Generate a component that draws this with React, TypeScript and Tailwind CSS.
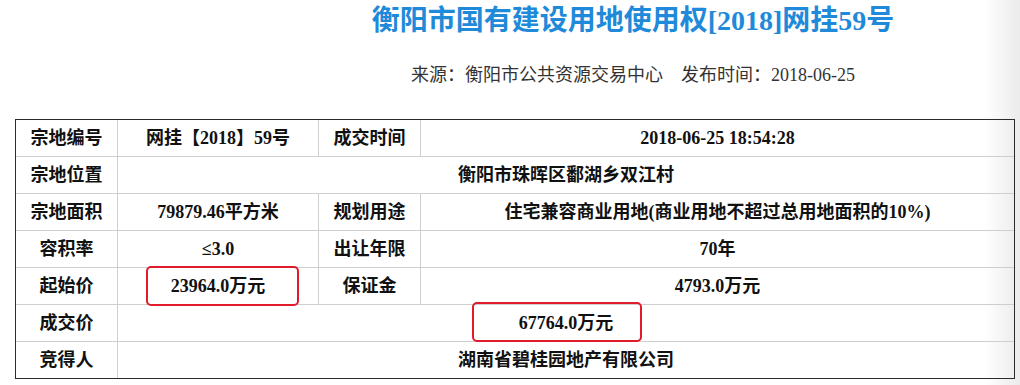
import type { ReactNode } from "react";

const serif = "font-['Liberation_Serif','Noto_Sans_CJK_SC',serif]";

function Label({ children }: { children: ReactNode }) {
  return (
    <div className="w-[102px] shrink-0 border-r border-[#cfcfcf] flex items-center justify-center font-bold">
      {children}
    </div>
  );
}

function Value({
  children,
  className = "",
  box,
}: {
  children: ReactNode;
  className?: string;
  box?: string;
}) {
  return (
    <div className={`relative flex items-center justify-center font-bold ${className}`}>
      {box && (
        <div className={`absolute rounded-[5px] border-2 border-[#e01b2b] ${box}`} />
      )}
      <span className="relative">{children}</span>
    </div>
  );
}

function Row({ children, first }: { children: ReactNode; first?: boolean }) {
  return (
    <div className={`flex ${first ? "h-[36px]" : "h-[37px] border-t border-[#cfcfcf]"}`}>
      {children}
    </div>
  );
}

export default function App() {
  return (
    <div
      className={`w-[1020px] h-[385px] overflow-hidden bg-[linear-gradient(to_right,#ffffff_96.5%,#ebebeb)] ${serif} text-[#111]`}
    >
      <div className="pl-[246px] h-[42px] flex items-center justify-center text-[28px] font-bold text-[#1f8ad9] leading-none">
        衡阳市国有建设用地使用权[2018]网挂59号
      </div>
      <div className="pl-[246px] mt-[22px] h-[22px] flex items-center justify-center text-[18px] text-[#333] leading-none">
        来源：衡阳市公共资源交易中心　发布时间：2018-06-25
      </div>

      <div className="ml-[15px] mt-[33px] w-[1000px] border border-[#2b2b2b] text-[18px] leading-none">
        <Row first>
          <Label>宗地编号</Label>
          <Value className="w-[201px] border-r border-[#cfcfcf]">网挂【2018】59号</Value>
          <Label>成交时间</Label>
          <Value className="flex-1">2018-06-25 18:54:28</Value>
        </Row>
        <Row>
          <Label>宗地位置</Label>
          <Value className="flex-1">衡阳市珠晖区鄱湖乡双江村</Value>
        </Row>
        <Row>
          <Label>宗地面积</Label>
          <Value className="w-[201px] border-r border-[#cfcfcf]">79879.46平方米</Value>
          <Label>规划用途</Label>
          <Value className="flex-1">住宅兼容商业用地(商业用地不超过总用地面积的10%)</Value>
        </Row>
        <Row>
          <Label>容积率</Label>
          <Value className="w-[201px] border-r border-[#cfcfcf]">≤3.0</Value>
          <Label>出让年限</Label>
          <Value className="flex-1">70年</Value>
        </Row>
        <Row>
          <Label>起始价</Label>
          <Value
            className="w-[201px] border-r border-[#cfcfcf]"
            box="left-[28px] right-[19px] top-[-2px] bottom-[-2px]"
          >
            23964.0万元
          </Value>
          <Label>保证金</Label>
          <Value className="flex-1">4793.0万元</Value>
        </Row>
        <Row>
          <Label>成交价</Label>
          <Value className="flex-1">
            <span className="relative inline-block">
              <span className="absolute left-[-47px] right-[-29px] top-[-12px] bottom-[-10px] rounded-[5px] border-2 border-[#e01b2b]" />
              67764.0万元
            </span>
          </Value>
        </Row>
        <Row>
          <Label>竞得人</Label>
          <Value className="flex-1">湖南省碧桂园地产有限公司</Value>
        </Row>
      </div>
    </div>
  );
}
